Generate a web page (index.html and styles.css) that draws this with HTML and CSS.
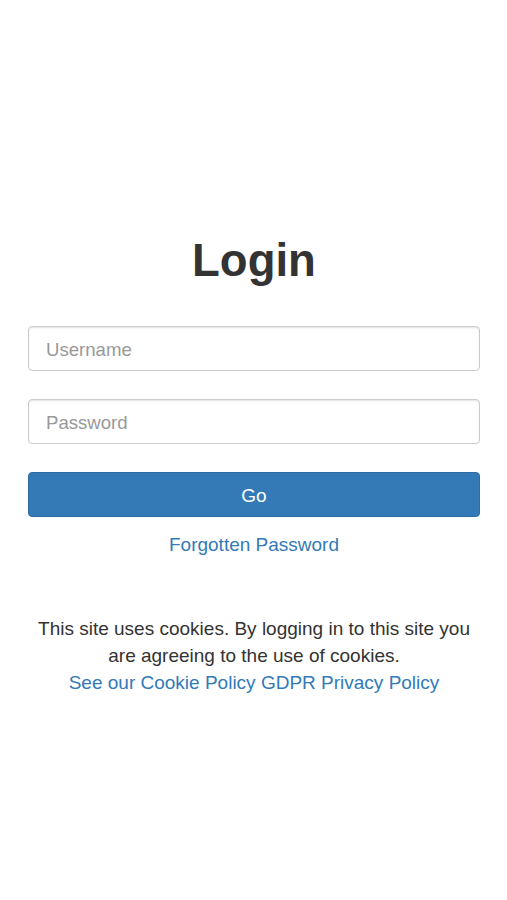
FILE: index.html
```html
<!DOCTYPE html>
<html lang="en">
<head>
<meta charset="utf-8">
<title>Login</title>
<link rel="stylesheet" href="styles.css">
</head>
<body>
<main class="page">
  <h1 class="title">Login</h1>
  <form class="login-form">
    <input class="field" type="text" placeholder="Username">
    <input class="field" type="password" placeholder="Password">
    <button class="btn-go" type="button">Go</button>
  </form>
  <a class="forgot" href="#">Forgotten Password</a>
  <p class="cookies">This site uses cookies. By logging in to this site you are agreeing to the use of cookies.<br>
    <a href="#">See our Cookie Policy</a> <a href="#">GDPR Privacy Policy</a></p>
</main>
</body>
</html>
```
FILE: styles.css
```css
html, body {
  margin: 0;
  padding: 0;
  background: #fff;
}
body {
  font-family: "Liberation Sans", Arial, Helvetica, sans-serif;
  color: #333;
  font-size: 19px;
  line-height: 27px;
}
.page {
  padding: 237px 27px 0 28px;
  display: flex;
  flex-direction: column;
  align-items: stretch;
}
.title {
  margin: 0 0 41px;
  text-align: center;
  font-size: 45.5px;
  line-height: 48px;
  font-weight: 700;
  color: #333;
}
.login-form {
  display: flex;
  flex-direction: column;
  gap: 28px;
  margin: 0;
}
.field {
  box-sizing: border-box;
  height: 45px;
  width: 100%;
  padding: 2px 17px 0;
  border: 1px solid #ccc;
  border-radius: 4px;
  box-shadow: inset 0 1px 2px rgba(0,0,0,0.12);
  font-family: inherit;
  font-size: 18.6px;
  color: #555;
  background: #fff;
}
.field::placeholder {
  color: #999;
}
.btn-go {
  box-sizing: border-box;
  height: 45px;
  width: 100%;
  background: #337ab7;
  border: 1px solid #2e6da4;
  border-radius: 4px;
  color: #fff;
  font-family: inherit;
  font-size: 19px;
  padding: 2px 0 0;
}
.forgot {
  margin-top: 14px;
  align-self: center;
  color: #337ab7;
  text-decoration: none;
}
.cookies {
  margin: 57px 0 0;
  text-align: center;
  padding: 0 2px;
}
.cookies a {
  color: #337ab7;
  text-decoration: none;
}
```
